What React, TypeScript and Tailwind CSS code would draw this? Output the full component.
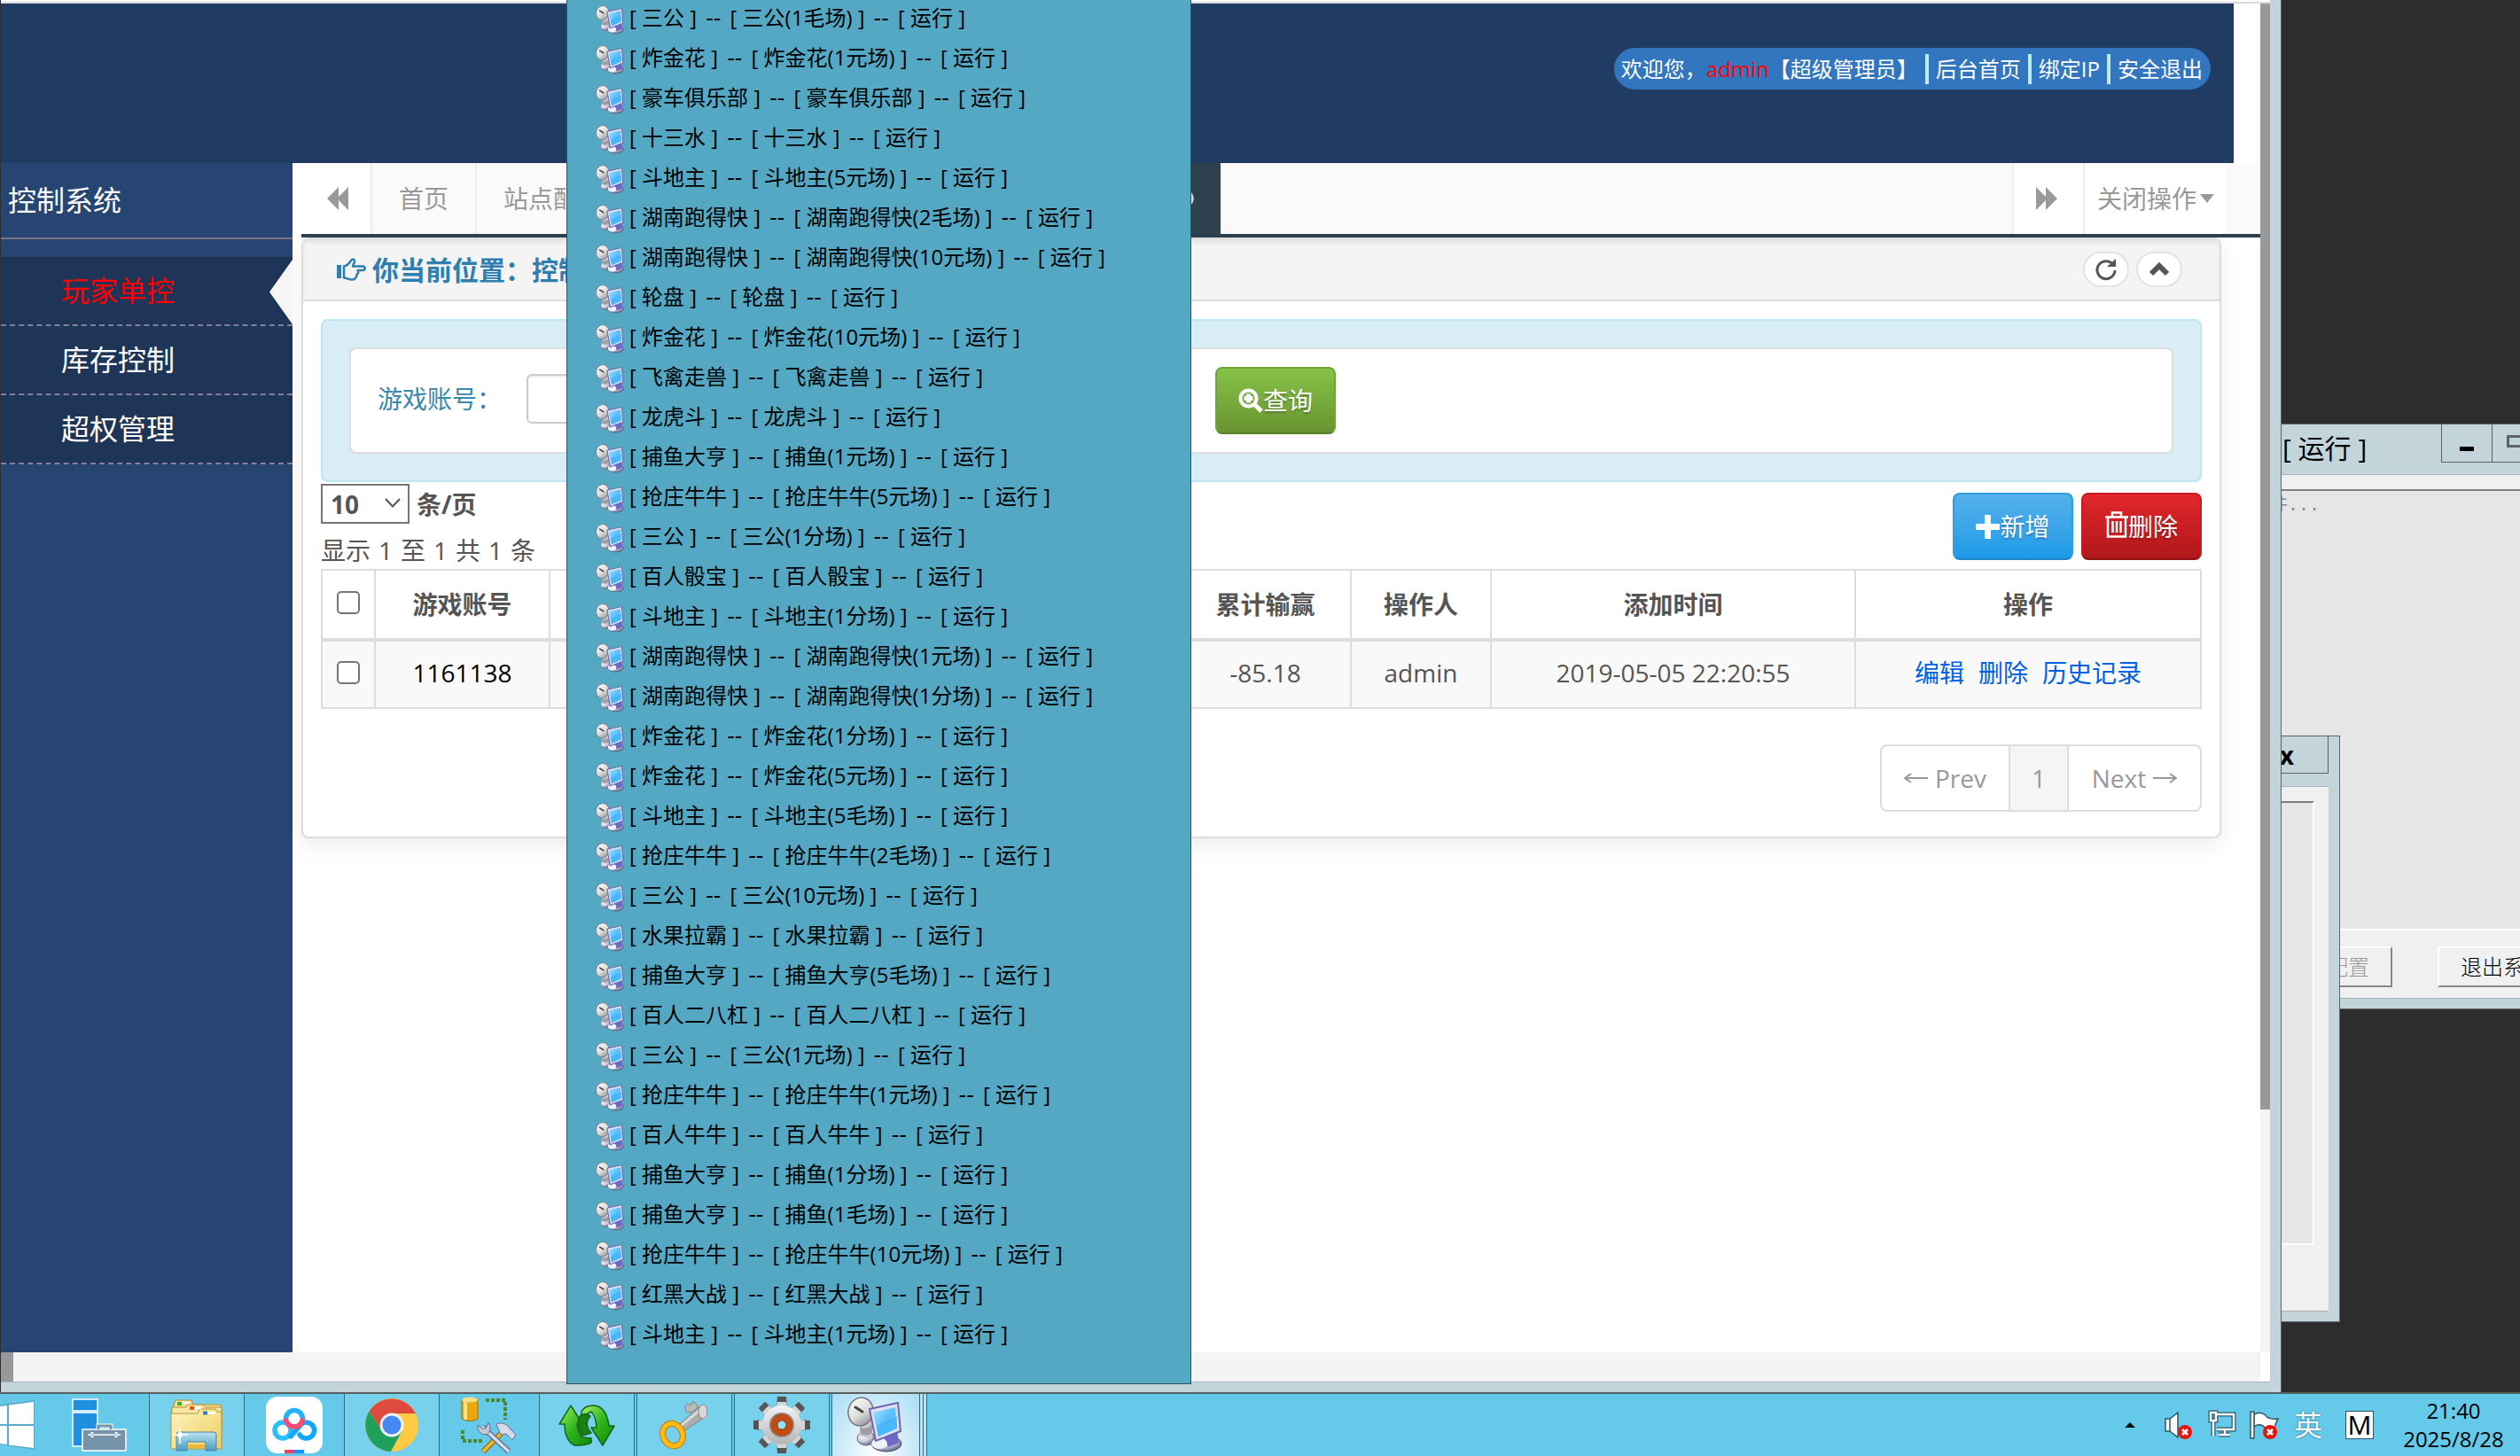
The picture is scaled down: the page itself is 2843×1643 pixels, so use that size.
import React from "react";
import { FaTimesCircle } from "react-icons/fa";

const instances: [string, string][] = [
  ["三公", "三公(1毛场)"],
  ["炸金花", "炸金花(1元场)"],
  ["豪车俱乐部", "豪车俱乐部"],
  ["十三水", "十三水"],
  ["斗地主", "斗地主(5元场)"],
  ["湖南跑得快", "湖南跑得快(2毛场)"],
  ["湖南跑得快", "湖南跑得快(10元场)"],
  ["轮盘", "轮盘"],
  ["炸金花", "炸金花(10元场)"],
  ["飞禽走兽", "飞禽走兽"],
  ["龙虎斗", "龙虎斗"],
  ["捕鱼大亨", "捕鱼(1元场)"],
  ["抢庄牛牛", "抢庄牛牛(5元场)"],
  ["三公", "三公(1分场)"],
  ["百人骰宝", "百人骰宝"],
  ["斗地主", "斗地主(1分场)"],
  ["湖南跑得快", "湖南跑得快(1元场)"],
  ["湖南跑得快", "湖南跑得快(1分场)"],
  ["炸金花", "炸金花(1分场)"],
  ["炸金花", "炸金花(5元场)"],
  ["斗地主", "斗地主(5毛场)"],
  ["抢庄牛牛", "抢庄牛牛(2毛场)"],
  ["三公", "三公(10元场)"],
  ["水果拉霸", "水果拉霸"],
  ["捕鱼大亨", "捕鱼大亨(5毛场)"],
  ["百人二八杠", "百人二八杠"],
  ["三公", "三公(1元场)"],
  ["抢庄牛牛", "抢庄牛牛(1元场)"],
  ["百人牛牛", "百人牛牛"],
  ["捕鱼大亨", "捕鱼(1分场)"],
  ["捕鱼大亨", "捕鱼(1毛场)"],
  ["抢庄牛牛", "抢庄牛牛(10元场)"],
  ["红黑大战", "红黑大战"],
  ["斗地主", "斗地主(1元场)"],
];

function ServerSymbols() {
  return (
    <svg className="absolute size-0" aria-hidden="true">
      <defs>
        <linearGradient id="dish" x1="0" y1="0" x2="1" y2="1">
          <stop offset="0" stopColor="#ffffff" />
          <stop offset=".55" stopColor="#dcdcdc" />
          <stop offset="1" stopColor="#7d7d86" />
        </linearGradient>
        <linearGradient id="screen" x1="0" y1="0" x2="1" y2="1">
          <stop offset="0" stopColor="#9fe6ff" />
          <stop offset=".5" stopColor="#57bdfb" />
          <stop offset="1" stopColor="#7fd8ff" />
        </linearGradient>
        <radialGradient id="base" cx=".35" cy=".3" r=".8">
          <stop offset="0" stopColor="#ffffff" />
          <stop offset=".5" stopColor="#cfcfe6" />
          <stop offset="1" stopColor="#55557e" />
        </radialGradient>
        <symbol id="server" viewBox="0 0 64 64">
          <ellipse cx="21" cy="47" rx="10" ry="8" fill="url(#base)" stroke="#6d6d76" />
          <path d="M14 30 28 26 28 48 14 44Z" fill="#c9c9cd" />
          <path d="M14 34c4 3 9 2 14-2v9c-4 3-9 3-13 1z" fill="#9e9ea4" />
          <ellipse cx="15" cy="17" rx="14" ry="16" transform="rotate(14 15 17)" fill="url(#dish)" stroke="#75757a" strokeWidth="1.5" />
          <path d="M9 12 17 17" stroke="#444" strokeWidth="3" strokeLinecap="round" />
          <ellipse cx="44" cy="53" rx="17" ry="9" fill="url(#base)" stroke="#4a4a6c" />
          <path d="M40 44 56 38 58 52 46 57Z" fill="#6f66c8" />
          <ellipse cx="36" cy="53" rx="9" ry="6" fill="#f1f1fb" />
          <path d="M25 14 57 7 60 39 32 50Z" fill="#dfe1f0" stroke="#6b66b0" strokeWidth="2" />
          <path d="M29 18 54 12 56 36 35 45Z" fill="url(#screen)" />
          <path d="M33 33 56 22 56 36 35 45Z" fill="#3fb0f8" opacity=".7" />
        </symbol>
      </defs>
    </svg>
  );
}

function ServerIcon({ className }: { className: string }) {
  return (
    <svg className={className} aria-hidden="true">
      <use href="#server" />
    </svg>
  );
}

function Header() {
  return (
    <header className="mr-[30px] flex h-[180px] shrink-0 items-start justify-end bg-[#203c62] pt-[50px] pr-[26px]">
      <nav className="flex h-[47px] items-center rounded-[24px] bg-[#3276c0] pr-[9px] pl-2 text-2xl text-white">
        <span className="pr-2">
          欢迎您，<span className="text-[#f00]">admin</span>【超级管理员】
        </span>
        <a href="#home" className="border-l-4 border-[#bfe9f5] px-2 leading-[34px]">后台首页</a>
        <a href="#ip" className="border-l-4 border-[#bfe9f5] px-2 leading-[34px]">绑定IP</a>
        <a href="#quit" className="border-l-4 border-[#bfe9f5] pl-2 leading-[34px]">安全退出</a>
      </nav>
    </header>
  );
}

function Sidebar() {
  const items = ["玩家单控", "库存控制", "超权管理"];
  return (
    <aside className="flex w-[329px] shrink-0 flex-col bg-[#264572] text-[32px] text-white">
      <h2 className="flex h-[86px] items-center border-b-2 border-[#7c7481] pl-2">控制系统</h2>
      <ul className="mt-5 bg-[#1f3558]">
        {items.map((item, i) => (
          <li key={item} className="relative">
            <a
              href={"#menu" + i}
              className={
                "flex h-[78px] items-center border-b-2 border-dashed border-[#85809a] pl-[68px] " + (i === 0 ? "text-[#f00]" : "text-white")
              }
            >
              {item}
            </a>
            {i === 0 && (
              <svg className="absolute top-[3px] right-0 h-[73px] w-[26px]" viewBox="0 0 26 73" aria-hidden="true">
                <path d="M26 0 0 36.5 26 73Z" fill="#f5f5f5" />
              </svg>
            )}
          </li>
        ))}
      </ul>
    </aside>
  );
}

function SkipIcon({ forward = false }: { forward?: boolean }) {
  return (
    <svg className="h-[26px] w-6" viewBox="0 0 24 26" fill="currentColor" aria-hidden="true">
      <path d={forward ? "M0 0 11 11V0L24 13 11 26V15L0 26Z" : "M24 0 13 11V0L0 13 13 26V15L24 26Z"} />
    </svg>
  );
}

function Tabs() {
  return (
    <div className="flex h-[84px] border-b-4 border-[#2f404f] bg-[#fafafa] text-[28px] text-[#999]">
      <button aria-label="向左滚动" className="flex w-20 items-center justify-center border-r-2 border-[#eee] bg-white pl-1">
        <SkipIcon />
      </button>
      <button className="w-[118px] border-r-2 border-[#eee]">首页</button>
      <button className="border-r-2 border-[#eee] px-[30px]">站点配置</button>
      <button aria-label="关闭当前标签" className="flex w-[665px] items-center justify-end bg-[#2f404f] pr-[30px] text-[#ddd]">
        <FaTimesCircle className="size-5" />
      </button>
      <button aria-label="向右滚动" className="ml-auto flex w-20 items-center justify-center border-l-2 border-[#eee] bg-white pr-1">
        <SkipIcon forward />
      </button>
      <button className="mr-[38px] flex items-center gap-1 border-l-2 border-[#eee] bg-white px-[14px]">
        关闭操作
        <svg className="h-[10px] w-4" viewBox="0 0 16 10" aria-hidden="true">
          <path d="M0 0H16L8 10Z" fill="#999" />
        </svg>
      </button>
    </div>
  );
}

function PanelHeader() {
  const round = "flex h-10 w-[52px] items-center justify-center rounded-[20px] border-2 border-[#e3e3e3] bg-white text-[#555]";
  return (
    <div className="flex h-[70px] items-center border-b-2 border-[#ddd] bg-[#f4f4f4] pr-[42px] pl-[38px] shadow-[inset_0_4px_4px_#e4e4e4]">
      <svg className="mr-[7px] h-[26px] w-[33px]" viewBox="0 0 33 26" fill="none" aria-hidden="true">
        <path d="M0 8H5V23H0Z" fill="#2f7eb0" />
        <path
          d="M8 9.500C12 9 14 6 16 3 17 1 20 1 20 4 20 6 18 8 18 9.500H29C32.500 9.500 32.500 14 29 14H23.500C25 16 24 18 22.500 18.500 23 21 21.500 22 21 22.500 20.500 24.500 19 24.500 17 24.500 13 24.500 11 22.500 8 22.500Z"
          stroke="#2f7eb0"
          strokeWidth="2.500"
          strokeLinejoin="round"
        />
      </svg>
      <h1 className="text-[30px] font-bold text-[#2f7eb0]">
        你当前位置<span className="font-['Noto_Sans_CJK_TC',sans-serif] leading-none">：</span>控制系统
      </h1>
      <button aria-label="刷新" className={round + " ml-auto"}>
        <svg className="h-7 w-7" viewBox="0 0 28 28" fill="none" aria-hidden="true">
          <path d="M21 7.500A10 10 0 1 0 24 15" stroke="#555" strokeWidth="3" />
          <path d="M25 2V11H15Z" fill="#555" />
        </svg>
      </button>
      <button aria-label="收起" className={round + " ml-2"}>
        <svg className="h-4 w-[22px]" viewBox="0 0 22 16" fill="none" aria-hidden="true">
          <path d="M2 13 11 4 20 13" stroke="#555" strokeWidth="6" />
        </svg>
      </button>
    </div>
  );
}

function SearchBox() {
  return (
    <div className="rounded-lg border-2 border-[#bce8f1] bg-[#d9edf7] p-[30px]">
      <form className="flex h-[120px] items-center rounded-lg border-2 border-[#ddd] bg-white pb-1 pl-[30px] text-[28px]">
        <label htmlFor="account" className="w-[168px] text-[#3a87ad]">
          游戏账号<span className="font-['Noto_Sans_CJK_TC',sans-serif] leading-none">：</span>
        </label>
        <input id="account" className="h-14 w-[740px] rounded-md border-2 border-[#ccc] bg-white px-3 shadow-[inset_0_2px_2px_#eee]" />
        <button
          type="button"
          className="mt-1 ml-[37px] flex h-[76px] w-[136px] items-center justify-center rounded-lg border-2 border-[#6fa436] border-b-[#5a8228] bg-linear-to-b from-[#87c249] to-[#689430] text-white text-shadow-[0_2px_2px_#00000040]"
        >
          <svg className="h-7 w-7" viewBox="0 0 28 28" fill="none" aria-hidden="true">
            <circle cx="11.500" cy="11.500" r="9" stroke="#fff" strokeWidth="4" />
            <path d="M18 18 26 26" stroke="#fff" strokeWidth="5" />
            <path d="M9 6.500h5v2.500H16.500v5h-2.500V16.500h-5v-2.500H6.500v-5h2.500Z" fill="#fff" />
          </svg>
          查询
        </button>
      </form>
    </div>
  );
}

function Toolbar() {
  const button = "flex h-[76px] w-[136px] items-center justify-center rounded-lg border-2 text-white text-shadow-[0_2px_2px_#00000040]";
  return (
    <div className="flex justify-between text-[28px] text-[#555]">
      <div className="pt-[2px]">
        <label className="flex h-[45px] items-center gap-2 font-bold">
          <span className="relative flex h-full w-[100px]">
            <select className="h-full w-full appearance-none border-2 border-[#767676] bg-white pl-[9px]">
              <option>10</option>
            </select>
            <svg className="pointer-events-none absolute top-4 right-[10px] h-[11px] w-[18px]" viewBox="0 0 18 11" fill="none" aria-hidden="true">
              <path d="M1 1 9 9.500 17 1" stroke="#555" strokeWidth="2" />
            </svg>
          </span>
          条/页
        </label>
        <p className="flex h-[51px] items-center gap-[9px] pt-2">
          <span>显示</span>
          <span>1</span>
          <span>至</span>
          <span>1</span>
          <span>共</span>
          <span>1</span>
          <span>条</span>
        </p>
      </div>
      <div className="flex items-start gap-[9px] pt-3">
        <button className={button + " border-[#2c9fe0] border-b-[#1a86c8] bg-linear-to-b from-[#54b1ec] to-[#1a9ae6]"}>
          <svg className="h-[27px] w-[27px]" viewBox="0 0 27 27" aria-hidden="true">
            <path d="M10 0H17V10H27V17H17V27H10V17H0V10H10Z" fill="#fff" />
          </svg>
          新增
        </button>
        <button className={button + " border-[#c41c20] border-b-[#8f1216] bg-linear-to-b from-[#e2272c] to-[#b0171b]"}>
          <svg className="mb-1 h-[31px] w-[26px]" viewBox="0 0 26 31" fill="none" stroke="#fff" strokeWidth="2.500" aria-hidden="true">
            <path d="M0 6.500H26M8 6V1.500H18V6M3 6.500V28.500H23V6.500M8.500 11V24M13 11V24M17.500 11V24" />
          </svg>
          删除
        </button>
      </div>
    </div>
  );
}

function DataTable() {
  const head = "border-2 border-[#ddd] text-center";
  const cell = "border-2 border-[#ddd] pb-[5px] text-center";
  const box = "mx-auto block size-[26px] appearance-none rounded-[5px] border-2 border-[#767676] bg-white";
  return (
    <table className="w-full table-fixed border-collapse text-[28px] text-[#555]">
      <colgroup>
        <col className="w-[60px]" />
        <col className="w-[197px]" />
        <col />
        <col className="w-[193px]" />
        <col className="w-[158px]" />
        <col className="w-[411px]" />
        <col className="w-[390px]" />
      </colgroup>
      <thead>
        <tr className="h-[79px]">
          <th className={head + " pb-1"}><input type="checkbox" aria-label="全选" className={box} /></th>
          <th className={head}>游戏账号</th>
          <th className={head} />
          <th className={head}>累计输赢</th>
          <th className={head}>操作人</th>
          <th className={head}>添加时间</th>
          <th className={head}>操作</th>
        </tr>
      </thead>
      <tbody className="border-t-4 border-[#ddd]">
        <tr className="h-[77px] bg-[#f9f9f9]">
          <td className={cell}><input type="checkbox" aria-label="选择 1161138" className={box} /></td>
          <td className={cell + " text-black"}>1161138</td>
          <td className={cell} />
          <td className={cell}>-85.18</td>
          <td className={cell}>admin</td>
          <td className={cell}>2019-05-05 22:20:55</td>
          <td className={cell}>
            <div className="flex justify-center gap-4 text-[#0060e6]">
              <a href="#edit">编辑</a>
              <a href="#delete">删除</a>
              <a href="#history">历史记录</a>
            </div>
          </td>
        </tr>
      </tbody>
    </table>
  );
}

function Arrow({ flip = false }: { flip?: boolean }) {
  return (
    <svg className="h-3 w-[27px]" viewBox="0 0 27 12" fill="none" stroke="#999" strokeWidth="2" aria-hidden="true">
      <path d={flip ? "M0 6H26M19 1 26 6 19 11" : "M27 6H1M8 1 1 6 8 11"} />
    </svg>
  );
}

function Pager() {
  return (
    <nav className="mt-10 flex justify-end text-[28px] text-[#999]">
      <div className="flex h-[76px] overflow-hidden rounded-lg border-2 border-[#ddd] bg-white">
        <button className="flex w-[143px] items-center justify-center gap-2">
          <Arrow />
          Prev
        </button>
        <button className="w-[68px] border-x-2 border-[#ddd] bg-[#f5f5f5]">1</button>
        <button className="flex w-[148px] items-center justify-center gap-2">
          Next
          <Arrow flip />
        </button>
      </div>
    </nav>
  );
}

function BrowserWindow() {
  return (
    <div className="absolute inset-y-0 right-[269px] left-0 flex flex-col border-r border-l border-l-[#2b3038] border-r-[#5b6468] bg-[#c3d5db] pr-3 pb-[11px]">
      <div className="h-1 shrink-0 border-b-2 border-[#d9dade] bg-white" />
      <div className="flex min-h-0 flex-1 bg-white">
        <div className="flex min-w-0 flex-1 flex-col">
          <Header />
          <div className="flex min-h-0 flex-1">
            <Sidebar />
            <main className="min-w-0 flex-1 pl-[10px]">
              <Tabs />
              <section className="mr-11 overflow-hidden rounded-lg border-2 border-[#ddd] bg-white shadow-[0_8px_24px_#00000014]">
                <PanelHeader />
                <div className="px-5 pt-5 pb-7">
                  <SearchBox />
                  <Toolbar />
                  <DataTable />
                  <Pager />
                </div>
              </section>
            </main>
          </div>
        </div>
        <div className="w-[11px] shrink-0 bg-[#f4f4f4]">
          <div className="h-[82%] bg-[#999]" />
        </div>
      </div>
      <div className="flex h-[34px] shrink-0 border-b border-[#a9b4bb] bg-[#f4f4f4]">
        <div className="w-[14px] bg-[#999]" />
        <div className="ml-auto w-[11px] bg-white" />
      </div>
    </div>
  );
}

function GameServerWindow() {
  return (
    <div className="absolute top-[478px] right-0 flex h-[661px] w-[300px] flex-col border-y border-[#5b6468] bg-[#c3d5db] pb-[11px]">
      <div className="flex h-14 shrink-0 items-start">
        <span className="pt-[6px] pl-8 text-[30px] leading-[42px] whitespace-pre text-black">[ 运行 ]</span>
        <button aria-label="最小化" className="ml-auto flex h-[43px] w-[57px] items-center justify-center border-b border-l border-[#5b6468] pt-3">
          <span className="h-[5px] w-4 bg-black" />
        </button>
        <button aria-label="最大化" className="flex h-[43px] w-8 items-center border-b border-l border-[#5b6468] pb-1 pl-4">
          <span className="h-[14px] w-4 border-[3px] border-r-0 border-[#5b6468]" />
        </button>
      </div>
      <div className="flex flex-1 flex-col border-y border-[#a9b4bb] bg-[#f0f0f0] pt-4">
        <p className="flex-1 overflow-hidden border-t-2 border-b-2 border-t-[#808080] border-b-white bg-[#e6e6e6] pt-px pl-[18px] font-['Liberation_Mono','Noto_Sans_CJK_SC',monospace] text-xl leading-8 text-[#888]">
          件...
        </p>
        <div className="flex h-[76px] items-start justify-end gap-[51px] pt-[18px] text-2xl font-light whitespace-nowrap">
          <button disabled className="h-[46px] w-[120px] border-2 border-t-white border-r-[#888] border-b-[#888] border-l-white pr-6 text-right text-[#999]">
            配置
          </button>
          <button className="h-[46px] w-[93px] overflow-hidden border-2 border-r-0 border-t-white border-b-[#888] border-l-white pl-6 text-left text-black">
            退出系统
          </button>
        </div>
      </div>
    </div>
  );
}

function DialogWindow() {
  return (
    <div className="absolute top-[830px] right-[203px] flex h-[662px] w-[120px] flex-col border border-[#5b6468] bg-[#c3d5db] pr-3 pb-[11px]">
      <div className="flex h-14 shrink-0 items-start">
        <button aria-label="关闭" className="h-[42px] w-full border-r border-b border-[#5b6468] pr-[38px] text-right text-[28px] leading-9 font-bold text-black">
          x
        </button>
      </div>
      <div className="flex-1 border-y border-[#a9b4bb] bg-[#f0f0f0] pt-4 pr-4 pb-[74px]">
        <div className="h-full border-2 border-t-[#808080] border-r-white border-b-white bg-[#e6e6e6]" />
      </div>
    </div>
  );
}

function GroupMenu() {
  const dash = "font-['DejaVu_Sans',sans-serif] leading-8";
  return (
    <ul className="absolute top-0 bottom-[9px] left-[639px] w-[705px] border-r border-b border-l border-[#2d5563] bg-[#55a8c3] text-2xl text-black">
      {instances.map(([game, room], i) => (
        <li key={i}>
          <button className="flex h-[45px] w-full items-center pb-1 pl-8 whitespace-pre">
            <ServerIcon className="mt-1 mr-[5px] size-[33px]" />
            <span className="flex items-baseline gap-[10px]">
              <span>[ {game} ]</span>
              <span className={dash}>--</span>
              <span>[ {room} ]</span>
              <span className={dash}>--</span>
              <span>[ 运行 ]</span>
            </span>
          </button>
        </li>
      ))}
    </ul>
  );
}

function StartLogo() {
  return (
    <svg className="h-14 w-10" viewBox="0 0 40 56" aria-hidden="true">
      <path d="M0 5 39 0V56L0 50Z" fill="#5aabc6" />
      <path d="M0 7 8 6V27H0ZM10 5.500 38 2V27H10ZM0 29H8V50L0 49ZM10 29H38V54L10 50.500Z" fill="#fff" />
    </svg>
  );
}

function ServerManagerIcon() {
  return (
    <svg className="h-[60px] w-[62px]" viewBox="0 0 62 60" aria-hidden="true">
      <g stroke="#fff" strokeWidth="1.500">
        <path d="M1 1H29V14H1Z" fill="#1f8fe0" />
        <path d="M1 16H29V54H1Z" fill="#1f8fe0" />
        <path d="M30 35V31H44V35" fill="none" stroke="#fff" strokeWidth="5" />
        <path d="M12 35H61V59H12Z" fill="#7493a8" />
      </g>
      <path d="M30 35V31H44V35" fill="none" stroke="#7493a8" strokeWidth="3" />
      <path d="M18 41H22M25 41H48M51 41H55" stroke="#fff" strokeWidth="1.500" />
      <path d="M23 38V44M50 38V44" stroke="#fff" strokeWidth="3" />
      <path d="M23 39V43M50 39V43" stroke="#5ab8dc" />
    </svg>
  );
}

function FolderIcon() {
  return (
    <svg className="h-[59px] w-[60px]" viewBox="0 0 60 59" aria-hidden="true">
      <defs>
        <linearGradient id="folder" x1="0" y1="0" x2="1" y2="1">
          <stop offset="0" stopColor="#fdf5c0" />
          <stop offset="1" stopColor="#f0cc5c" />
        </linearGradient>
        <linearGradient id="stand" x1="0" y1="0" x2="0" y2="1">
          <stop offset="0" stopColor="#b9e3f2" />
          <stop offset="1" stopColor="#4d9cc4" />
        </linearGradient>
      </defs>
      <g fill="#f3dc8a" stroke="#b8913a">
        <path d="M2 12 6 1H24L26 6H57V30H2Z" />
        <path d="M2 16V9H18L20 6H36L39 9H58V30H2Z" fill="#f8e7a4" />
      </g>
      <path d="M1 56V16H31L33 11H51L53 14H58V56Z" fill="url(#folder)" stroke="#b8913a" />
      <path d="M8 3h5v4H8z" fill="#3fae2a" />
      <path d="M22 8h5v4h-5z" fill="#e2571c" />
      <path d="M37 13.500h5v4h-5z" fill="#2e83cf" />
      <path d="M13 4h9M27 10h8M42 15.500h9" stroke="#fff" strokeWidth="2.500" />
      <path d="M7 58V40Q7 37 10 37H49Q52 37 52 40V58H40V48H19V58Z" fill="url(#stand)" stroke="#4686a8" />
      <path d="M20 51H39V55H20Z" fill="#e8b93d" />
      <path d="M11 32V50M3 40H20" stroke="#fff" strokeWidth="1.500" />
      <circle cx="11" cy="40" r="3" fill="#fff" />
    </svg>
  );
}

function CloudDiskIcon() {
  return (
    <svg className="size-16" viewBox="0 0 64 64" fill="none" aria-hidden="true">
      <rect width="64" height="64" rx="13" fill="#fff" />
      <circle cx="19" cy="38" r="9" stroke="#2cc0fb" strokeWidth="5.500" />
      <path d="M38 43A9 9 0 1 0 40 31L28 45" stroke="#14a6fb" strokeWidth="5.500" strokeLinecap="round" />
      <path d="M22.500 25A9.500 9.500 0 0 1 41.500 25" stroke="#22b4fb" strokeWidth="5.500" />
      <path d="M22.500 24.500A9.500 9.500 0 0 0 41.500 24.500" stroke="#fb4a72" strokeWidth="5.500" />
      <path d="M21 60H32V64H21Z" fill="#fb3d66" />
      <path d="M32 60H43V64H32Z" fill="#1e90ff" />
    </svg>
  );
}

function ChromeIcon() {
  return (
    <svg className="size-[60px]" viewBox="0 0 60 60" aria-hidden="true">
      <circle cx="30" cy="30" r="30" fill="#ffcb42" />
      <path d="M4.500 14.500A30 30 0 0 1 56 15.500L57 17H30L18.500 36.500Z" fill="#dc4b3e" />
      <path d="M4.500 14.500A30 30 0 0 0 29 60L41.500 37 30 43 18.500 36.500Z" fill="#1fa15d" />
      <circle cx="30" cy="30" r="13.500" fill="#f1f1f1" />
      <circle cx="30" cy="30" r="10.500" fill="#4587f3" />
    </svg>
  );
}

function DatabaseToolsIcon() {
  return (
    <svg className="size-16" viewBox="0 0 64 64" fill="none" aria-hidden="true">
      <path d="M1 3H19V25Q10 30 1 25Z" fill="#e9a90c" stroke="#9c6a14" />
      <path d="M5 4V26" stroke="#fbe48a" strokeWidth="4" />
      <ellipse cx="10" cy="3.500" rx="9" ry="3" fill="#f8df84" />
      <path d="M28 4H50V26" stroke="#4b8a2c" strokeWidth="4" strokeDasharray="4 2" />
      <path d="M2 38V50H24" stroke="#4b8a2c" strokeWidth="4" strokeDasharray="4 2" />
      <path d="M25 62 45 42" stroke="#7a5310" strokeWidth="6" />
      <path d="M25 62 45 42" stroke="#f1b32c" strokeWidth="4" />
      <path d="M40 31Q50 27 56 37L62 43 58 49 51 42 45 43Z" fill="#d5dae6" stroke="#65708c" />
      <path d="M24 34 54 62" stroke="#5f6a88" strokeWidth="6" />
      <path d="M24 34 54 62" stroke="#d8deea" strokeWidth="3.500" />
      <path d="M19 32Q18 43 29 43 36 38 31 29L28 36 24 36Z" fill="#c3c9d8" stroke="#65708c" />
    </svg>
  );
}

function RecycleIcon() {
  return (
    <svg className="h-[47px] w-16" viewBox="0 0 64 47" aria-hidden="true">
      <defs>
        <linearGradient id="leaf" x1="0" y1="0" x2="1" y2="1">
          <stop offset="0" stopColor="#a3f566" />
          <stop offset=".5" stopColor="#2fb51c" />
          <stop offset="1" stopColor="#0b8a0b" />
        </linearGradient>
      </defs>
      <g fill="url(#leaf)" stroke="#14641a" strokeWidth="1.500" strokeLinejoin="round">
        <path d="M14 1 27 22H21Q22 32 27 37L37 38V43Q32 46 18 46 7 40 7 22H1Z" />
        <path d="M50 46 37 26H43Q42 12 37 8L26 14V8Q29 1 40 1 54 2 57 24H63Z" />
        <path d="M24 13Q30 8 36 13 28 22 37 32L27 35Q19 22 24 13Z" fill="#17820f" />
      </g>
    </svg>
  );
}

function KeyIcon() {
  return (
    <svg className="h-14 w-14" viewBox="0 0 56 56" fill="none" aria-hidden="true">
      <path d="M29 8 31 4 35 6 37 2 41 3 43 8 38 13 30 14Z" fill="#b9b9b9" stroke="#888" />
      <path d="M23 27 45 7 53 18 27 35Z" fill="#ababab" stroke="#808080" />
      <path d="M24 29 47 10" stroke="#d9d9d9" strokeWidth="3" />
      <ellipse cx="49" cy="13" rx="5" ry="8" fill="#d6d6d6" stroke="#8a8a8a" />
      <ellipse cx="15" cy="39" rx="11" ry="13" transform="rotate(-25 15 39)" stroke="#c57c05" strokeWidth="7" />
      <ellipse cx="15" cy="39" rx="11" ry="13" transform="rotate(-25 15 39)" stroke="#fdbb16" strokeWidth="5" />
    </svg>
  );
}

function GearIcon() {
  return (
    <svg className="size-16" viewBox="0 0 64 64" aria-hidden="true">
      <defs>
        <linearGradient id="steel" x1="0" y1="0" x2="0" y2="1">
          <stop offset="0" stopColor="#f4f4f4" />
          <stop offset="1" stopColor="#b4b4b4" />
        </linearGradient>
      </defs>
      {[0, 45, 90, 135, 180, 225, 270, 315].map((angle) => (
        <g key={angle} transform={`rotate(${angle} 32 32)`}>
          <path d="M26 14 27 0H37L38 14Z" fill="#555" />
          <path d="M25 16 27 6H37L39 16Z" fill="#d5d5d5" />
        </g>
      ))}
      <circle cx="32" cy="32" r="22" fill="url(#steel)" />
      <circle cx="32" cy="32" r="14" fill="#8a8a8a" />
      <circle cx="32" cy="32" r="12.500" fill="#bf4c12" />
      <circle cx="32" cy="32" r="5.500" fill="#a33a08" />
      <circle cx="32" cy="32" r="4.500" fill="#8fe0f5" />
    </svg>
  );
}

function TaskSlot({ label, running, children }: { label: string; running?: boolean; children: React.ReactNode }) {
  return (
    <div className="w-[110px] shrink-0 pr-[2px]">
      <button
        aria-label={label}
        className={"flex h-full w-full items-center justify-center " + (running ? "border-x border-[#2f6d84] bg-[#77d1ec]" : "")}
      >
        {children}
      </button>
    </div>
  );
}

function ErrorBadge() {
  return (
    <g>
      <circle cx="23" cy="24" r="8" fill="#e8150f" />
      <path d="M20 21 26 27M26 21 20 27" stroke="#fff" strokeWidth="2.500" />
    </g>
  );
}

function Tray() {
  const icon = "size-8 overflow-visible";
  return (
    <div className="ml-auto flex items-center pr-[10px] text-black">
      <svg className="mr-[33px] h-[6px] w-3" viewBox="0 0 12 6" aria-hidden="true">
        <path d="M0 6 6 0 12 6Z" fill="#111" />
      </svg>
      <svg className={icon + " mr-4"} viewBox="0 0 32 32" fill="#fff" stroke="#2a5868" strokeWidth="1.500" aria-hidden="true">
        <path d="M1 9H6L15 2V30L6 23H1Z" />
        <path d="M6 9V23" />
        <g stroke="none"><ErrorBadge /></g>
      </svg>
      <svg className={icon + " mr-4"} viewBox="0 0 32 32" fill="none" aria-hidden="true">
        <path d="M10 4H30V21H11M20 21V26M13 27H26" stroke="#2a5868" strokeWidth="5" />
        <path d="M4 2H10V11H4ZM7 11V28" stroke="#2a5868" strokeWidth="5" />
        <path d="M10 4H30V21H11M20 21V26M13 27H26" stroke="#fff" strokeWidth="2.500" />
        <path d="M4 2H10V11H4ZM7 11V28" stroke="#fff" strokeWidth="2.500" />
      </svg>
      <svg className={icon + " mr-[18px]"} viewBox="0 0 32 32" fill="#fff" stroke="#2a5868" strokeWidth="1.500" aria-hidden="true">
        <path d="M5 4Q12 0 18 5 20 10 32 9 29 14 28 20 20 22 15 17 10 14 5 18Z" />
        <path d="M1 1H5V31H1Z" />
        <g stroke="none"><ErrorBadge /></g>
      </svg>
      <button className="mr-[26px] text-[32px] leading-8 text-white text-shadow-[0_0_2px_#1c4a5c]">英</button>
      <button className="mr-[25px] flex size-8 items-center justify-center border border-[#2a5868] bg-white text-[30px] leading-none">M</button>
      <time className="w-[130px] text-center text-2xl leading-8">
        21:40
        <br />
        2025/8/28
      </time>
    </div>
  );
}

function Taskbar() {
  return (
    <footer className="flex h-[70px] shrink-0 bg-[#65c9ea]">
      <button aria-label="开始" className="w-[58px] shrink-0"><StartLogo /></button>
      <TaskSlot label="服务器管理器"><ServerManagerIcon /></TaskSlot>
      <TaskSlot label="文件资源管理器" running><FolderIcon /></TaskSlot>
      <TaskSlot label="网盘"><CloudDiskIcon /></TaskSlot>
      <TaskSlot label="浏览器" running><ChromeIcon /></TaskSlot>
      <TaskSlot label="数据库工具"><DatabaseToolsIcon /></TaskSlot>
      <TaskSlot label="同步" running><RecycleIcon /></TaskSlot>
      <TaskSlot label="密钥" running><KeyIcon /></TaskSlot>
      <TaskSlot label="设置" running><GearIcon /></TaskSlot>
      <button
        aria-label="游戏服务器"
        className="flex w-[100px] shrink-0 items-center justify-center border-x border-[#2f6d84] bg-radial-[at_50%_100%] from-[#ffffff] to-[#a9ddf5]"
      >
        <ServerIcon className="size-16" />
      </button>
      <span className="w-1 border-r border-[#2f6d84] bg-[#b5e3f3]" />
      <span className="w-1 border-r border-[#2f6d84] bg-[#b5e3f3]" />
      <Tray />
    </footer>
  );
}

export default function App() {
  return (
    <div lang="zh-CN" className="relative flex h-screen flex-col overflow-hidden bg-[#2d2d2d] font-['Open_Sans','Noto_Sans_CJK_SC',sans-serif]">
      <ServerSymbols />
      <div className="relative min-h-0 flex-1 border-b-2 border-[#56605f]">
        <GameServerWindow />
        <DialogWindow />
        <BrowserWindow />
        <GroupMenu />
      </div>
      <Taskbar />
    </div>
  );
}
